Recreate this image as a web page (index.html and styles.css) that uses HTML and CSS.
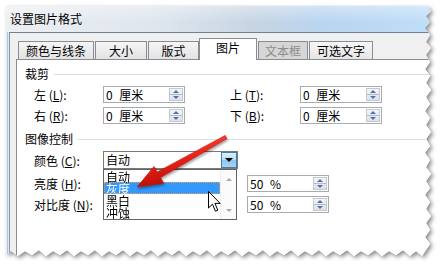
FILE: index.html
```html
<!DOCTYPE html>
<html lang="zh-CN">

<head>
    <meta charset="UTF-8">
    <meta name="viewport" content="width=device-width, initial-scale=1.0">
    <title>设置图片格式</title>
    <link rel="stylesheet" href="styles.css">
</head>

<body>
    <div class="shot">
        <div class="dialog">
            <!-- Title bar -->
            <div class="dialog-title">设置图片格式</div>

            <div class="dialog-body">
                <!-- Tabs -->
                <div class="tabs">
                    <div class="tab tab-1">颜色与线条</div>
                    <div class="tab tab-2">大小</div>
                    <div class="tab tab-3">版式</div>
                    <div class="tab tab-active">图片</div>
                    <div class="tab tab-disabled">文本框</div>
                    <div class="tab tab-6">可选文字</div>
                </div>

                <!-- Picture page -->
                <div class="panel">
                    <div class="group-title">裁剪</div>
                    <div class="crop-grid">
                        <span class="field-label">左 (<u>L</u>):</span>
                        <div class="spin">
                            <span class="spin-value">0 厘米</span>
                            <span class="spin-btns"><i class="up"></i><i class="down"></i></span>
                        </div>
                        <span></span>
                        <span class="field-label">上 (<u>T</u>):</span>
                        <div class="spin">
                            <span class="spin-value">0 厘米</span>
                            <span class="spin-btns"><i class="up"></i><i class="down"></i></span>
                        </div>

                        <span class="field-label">右 (<u>R</u>):</span>
                        <div class="spin">
                            <span class="spin-value">0 厘米</span>
                            <span class="spin-btns"><i class="up"></i><i class="down"></i></span>
                        </div>
                        <span></span>
                        <span class="field-label">下 (<u>B</u>):</span>
                        <div class="spin">
                            <span class="spin-value">0 厘米</span>
                            <span class="spin-btns"><i class="up"></i><i class="down"></i></span>
                        </div>
                    </div>

                    <div class="group-title group-image">图像控制</div>
                    <div class="image-rows">
                        <div class="row row-color">
                            <span class="field-label label-short">颜色 (<u>C</u>):</span>
                            <div class="combo">
                                <span class="combo-value">自动</span>
                                <span class="combo-btn"></span>

                                <!-- Open drop-down list -->
                                <div class="combo-list">
                                    <div class="combo-items">
                                        <div class="combo-item">自动</div>
                                        <div class="combo-item combo-item-selected">灰度</div>
                                        <div class="combo-item">黑白</div>
                                        <div class="combo-item">冲蚀</div>
                                    </div>
                                    <div class="combo-scroll"><i class="up"></i><i class="down"></i></div>
                                </div>
                            </div>
                        </div>
                        <div class="row row-bright">
                            <span class="field-label label-wide">亮度 (<u>H</u>):</span>
                            <div class="spin">
                                <span class="spin-value">50 %</span>
                                <span class="spin-btns"><i class="up"></i><i class="down"></i></span>
                            </div>
                        </div>
                        <div class="row row-contrast">
                            <span class="field-label label-wide">对比度 (<u>N</u>):</span>
                            <div class="spin">
                                <span class="spin-value">50 %</span>
                                <span class="spin-btns"><i class="up"></i><i class="down"></i></span>
                            </div>
                        </div>
                    </div>
                </div>
            </div>
        </div>
    </div>

    <!-- Red annotation arrow -->
    <svg class="annot-arrow" width="444" height="270" viewBox="0 0 444 270">
        <defs>
            <linearGradient id="redfill" x1="0" y1="0" x2="0.3" y2="1">
                <stop offset="0" stop-color="#ff5a48" />
                <stop offset="0.5" stop-color="#ee2417" />
                <stop offset="1" stop-color="#b80c06" />
            </linearGradient>
        </defs>
        <polygon points="225.2,135.4 226.8,138.6 160.6,177.6 163.6,183.2 137,187 154,166.4 157.2,171.9"
            fill="url(#redfill)" stroke="#c0100a" stroke-width="0.6" stroke-linejoin="round" />
    </svg>

    <!-- Mouse pointer -->
    <svg class="pointer" width="14" height="22" viewBox="0 0 14 22">
        <path d="M0.5 0.5 V17 L4.5 13.2 L7.4 20.2 L9.8 19.2 L7 12.4 H12.2 Z" fill="#ffffff" stroke="#000000"
            stroke-width="1" stroke-linejoin="round" />
    </svg>
</body>

</html>
```

FILE: styles.css
```css
* {
    box-sizing: border-box;
}

body {
    margin: 0;
    width: 444px;
    height: 270px;
    overflow: hidden;
    position: relative;
    background-color: #ffffff;
    font-family: "Noto Sans CJK SC", "Noto Sans", sans-serif;
    font-size: 12px;
    color: #000000;
}

/* Screenshot with torn edges */
.shot {
    padding: 6px 0 0 6px;
    filter: drop-shadow(2px 2px 2px rgba(0, 0, 0, 0.45));
}

.dialog {
    width: 426px;
    height: 252px;
    display: flex;
    flex-direction: column;
    background: linear-gradient(90deg, #e8eef5 0 1px, #a9c6e6 1px 2px, #dfe8f2 2px);
    clip-path: polygon(0 0, 421px 0, 425px 5px, 420px 10px, 424px 16px, 419px 22px, 424px 29px, 420px 36px,
            425px 42px, 420px 49px, 424px 56px, 419px 63px, 424px 70px, 420px 77px, 425px 84px, 420px 91px,
            424px 98px, 419px 105px, 424px 112px, 420px 119px, 425px 126px, 420px 133px, 424px 140px,
            419px 147px, 424px 154px, 420px 161px, 425px 168px, 420px 175px, 424px 182px, 419px 189px,
            424px 196px, 420px 203px, 425px 210px, 420px 217px, 424px 224px, 419px 231px, 424px 238px,
            420px 244px, 416px 250px, 410px 245px, 404px 250px, 397px 244px, 390px 249px, 383px 245px,
            376px 250px, 369px 244px, 362px 249px, 355px 245px, 348px 250px, 341px 244px, 334px 249px,
            327px 245px, 320px 250px, 313px 244px, 306px 249px, 299px 245px, 292px 250px, 285px 244px,
            278px 249px, 271px 245px, 264px 250px, 257px 244px, 250px 249px, 243px 245px, 236px 250px,
            229px 244px, 222px 249px, 215px 245px, 208px 250px, 201px 244px, 194px 249px, 187px 245px,
            180px 250px, 173px 244px, 166px 249px, 159px 245px, 152px 250px, 145px 244px, 138px 249px,
            131px 245px, 124px 250px, 117px 244px, 110px 249px, 103px 245px, 96px 250px, 89px 244px,
            82px 249px, 75px 245px, 68px 250px, 61px 244px, 54px 249px, 47px 245px, 40px 250px, 33px 244px,
            26px 249px, 19px 245px, 12px 250px, 5px 245px, 0 249px);
}

.dialog-title {
    flex: none;
    height: 26px;
    line-height: 25px;
    padding-left: 4px;
    background:
        linear-gradient(180deg, rgba(255, 255, 255, 0.35), rgba(255, 255, 255, 0) 60%),
        linear-gradient(90deg, #eceff3 0%, #dfe6ee 35%, #c7d5e3 58%, #b9d5f0 74%, #bfdef8 100%);
}

.dialog-body {
    flex: 1;
    display: flex;
    flex-direction: column;
    margin-left: 3px;
    padding: 5px 0 0 6px;
    background-color: #f0f0f0;
    border-top: 1px solid #6f8193;
    border-left: 1px solid #8796a8;
}

/* Tabs */
.tabs {
    display: flex;
    align-items: flex-end;
    height: 21px;
    margin-left: 2px;
}

.tab {
    height: 18px;
    line-height: 17px;
    margin-right: 1px;
    text-align: center;
    border: 1px solid #898c95;
    border-bottom: none;
    background: linear-gradient(#f5f5f5, #e3e3e3);
}

.tab-1 {
    width: 76px;
}

.tab-2 {
    width: 52px;
}

.tab-3 {
    width: 51px;
}

.tab-active {
    width: 58px;
    height: 22px;
    line-height: 18px;
    margin-bottom: -1px;
    margin-left: -1px;
    position: relative;
    z-index: 1;
    background: #ffffff;
}

.tab-disabled {
    width: 50px;
    color: #8d8d8d;
    background: #d6d6d6;
}

.tab-6 {
    width: 64px;
    background: linear-gradient(#f7f7f7, #e6e6e6);
}

/* Page */
.panel {
    flex: 1;
    position: relative;
    padding: 7px 0 0 8px;
    background-color: #ffffff;
    border: 1px solid #898c95;
}

.group-title {
    display: flex;
    align-items: center;
    height: 14px;
    line-height: 14px;
}

.group-title::after {
    content: "";
    flex: 1;
    height: 1px;
    margin-left: 5px;
    background-color: #d5dfe5;
}

.group-image {
    margin-top: 8px;
}

.crop-grid {
    display: grid;
    grid-template-columns: 69px 82px 45px 70px 82px;
    grid-auto-rows: 17px;
    row-gap: 4px;
    margin: 5px 0 0 9px;
}

.field-label {
    line-height: 17px;
    white-space: nowrap;
}

.field-label u {
    text-underline-offset: 1px;
}

/* Spin box */
.spin {
    display: flex;
    width: 82px;
    height: 17px;
    background-color: #ffffff;
    border: 1px solid #a9abb0;
}

.spin-value {
    flex: 1;
    padding-left: 2px;
    line-height: 15px;
    word-spacing: 4px;
}

.spin-btns {
    display: flex;
    flex-direction: column;
    width: 14px;
    margin: 1px 1px 1px 0;
    border: 1px solid #c4c9d1;
    background: linear-gradient(#f3f5f8, #dde2e9);
}

.spin-btns i {
    flex: 1;
    display: flex;
    align-items: center;
    justify-content: center;
}

.spin-btns i::before {
    content: "";
    border-left: 3px solid transparent;
    border-right: 3px solid transparent;
}

.spin-btns .up::before {
    border-bottom: 3px solid #5070b0;
}

.spin-btns .down {
    border-top: 1px solid #b4bbc6;
}

.spin-btns .down::before {
    border-top: 3px solid #5070b0;
}

/* Image control rows */
.image-rows {
    margin: 5px 0 0 9px;
}

.row {
    display: flex;
    align-items: center;
}

.row-bright {
    margin-top: 6px;
}

.row-contrast {
    margin-top: 4px;
}

.label-short {
    width: 69px;
}

.label-wide {
    width: 213px;
}

/* Combo box */
.combo {
    position: relative;
    display: flex;
    width: 135px;
    height: 18px;
    background-color: #ffffff;
    border: 1px solid #7a7a7a;
    z-index: 2;
}

.combo-value {
    flex: 1;
    padding-left: 2px;
    line-height: 16px;
}

.combo-btn {
    display: flex;
    align-items: center;
    justify-content: center;
    width: 16px;
    border: 1px solid #3c7fb1;
    background: linear-gradient(#dff0fc, #b3dbf6 48%, #8cc6ee 52%, #a7d3f2);
}

.combo-btn::before {
    content: "";
    border-left: 4px solid transparent;
    border-right: 4px solid transparent;
    border-top: 4px solid #000000;
}

.combo-list {
    position: absolute;
    top: 17px;
    left: -1px;
    display: flex;
    width: 134px;
    height: 51px;
    overflow: hidden;
    background-color: #ffffff;
    border: 1px solid #646464;
}

.combo-items {
    flex: 1;
}

.combo-item {
    height: 12px;
    line-height: 13px;
    padding-left: 2px;
}

.combo-item-selected {
    color: #ffffff;
    background-color: #3399ff;
    outline: 1px dotted #f0a040;
    outline-offset: -1px;
}

.combo-scroll {
    display: flex;
    flex-direction: column;
    justify-content: space-between;
    align-items: center;
    width: 16px;
    padding: 8px 0 7px;
    background-color: #fbfbfb;
    border-left: 1px solid #ededed;
}

.combo-scroll i::before {
    content: "";
    display: block;
    border-left: 3px solid transparent;
    border-right: 3px solid transparent;
}

.combo-scroll .up::before {
    border-bottom: 3px solid #a9a9a9;
}

.combo-scroll .down::before {
    border-top: 3px solid #a9a9a9;
}

/* Annotation overlays */
.annot-arrow {
    position: absolute;
    left: 0;
    top: 0;
    filter: drop-shadow(1px 2px 1px rgba(0, 0, 0, 0.35));
    pointer-events: none;
}

.pointer {
    position: absolute;
    left: 208px;
    top: 191px;
    pointer-events: none;
}
```
